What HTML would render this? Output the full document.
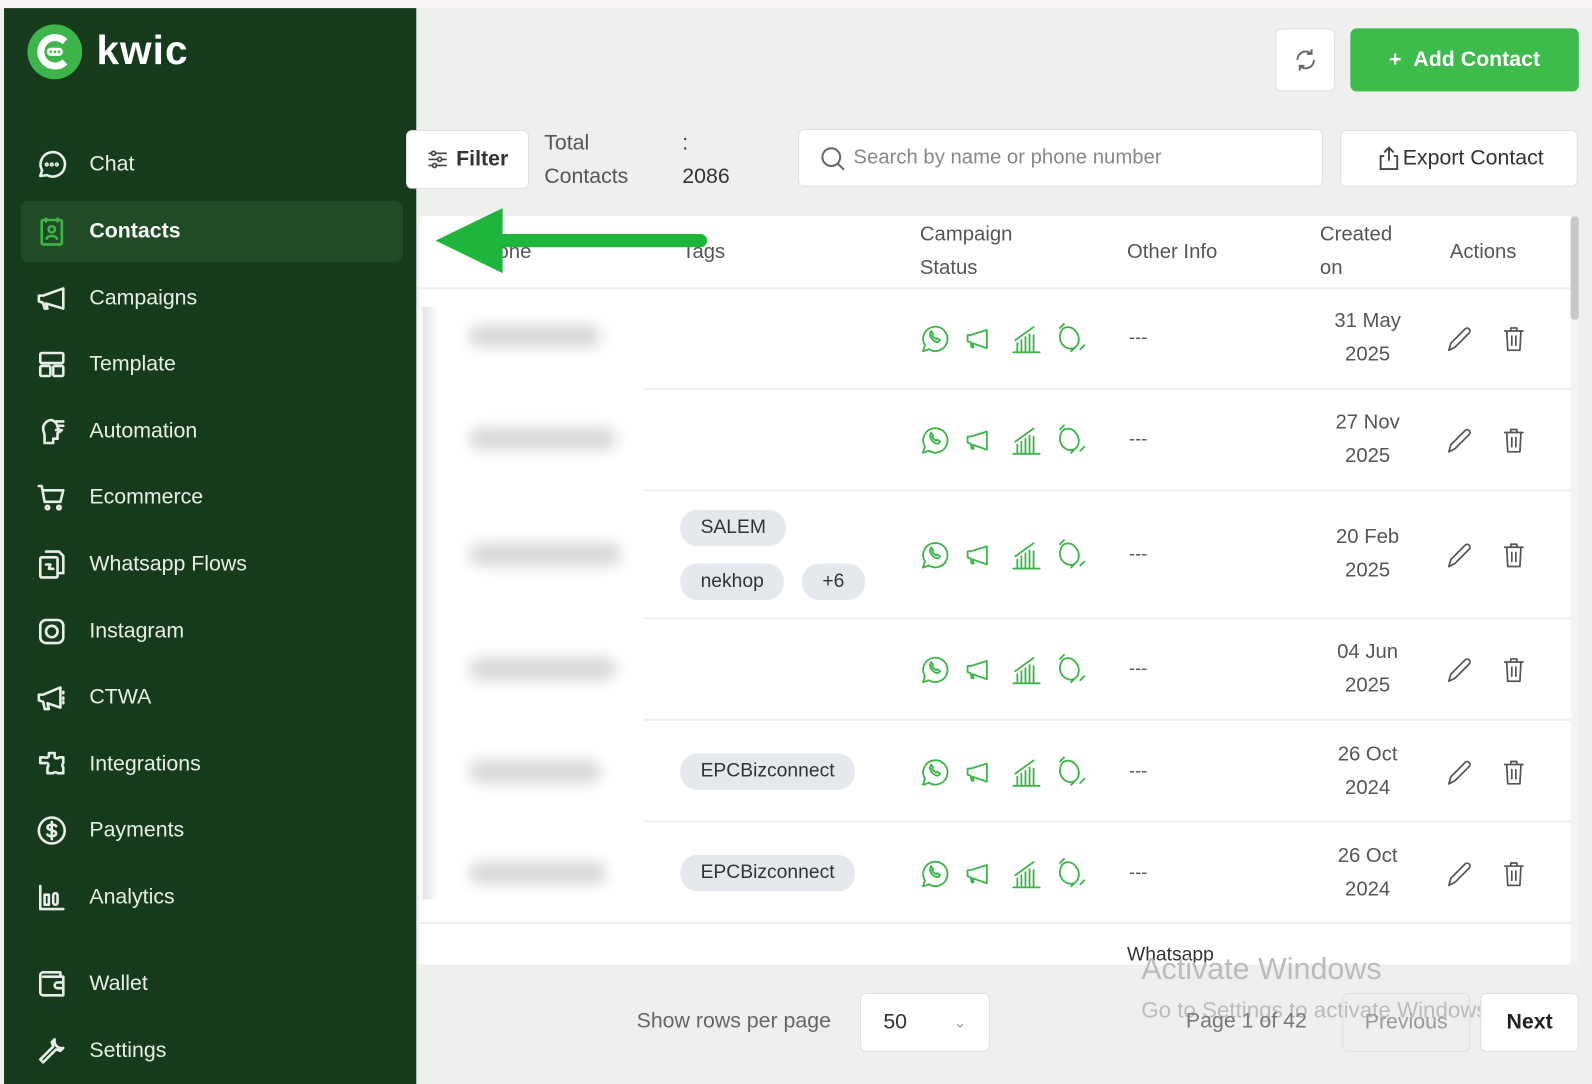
<!DOCTYPE html>
<html><head><meta charset="utf-8"><style>
*{margin:0;padding:0;box-sizing:border-box}
html,body{width:1592px;height:1080px;overflow:hidden;background:#eef0ee;font-family:"Liberation Sans",sans-serif}
#w{position:absolute;left:0;top:0;width:1568px;height:1064px;transform:scale(1.01531);transform-origin:0 0;background:#eef0ee}
.a{position:absolute}
#sb{left:4px;top:8px;width:406px;height:1060px;background:#163a1c}
.mi{position:absolute;left:30px;color:#e8efe8;font-size:21px;display:flex;align-items:center;gap:20px}
.mi svg{width:34px;height:34px;stroke:#e8efe8;fill:none;stroke-width:1.8;stroke-linecap:round;stroke-linejoin:round}
.btn{position:absolute;background:#fff;border:1px solid #dde0dd;border-radius:6px;display:flex;align-items:center;justify-content:center;color:#333;font-size:21px}
.th{position:absolute;color:#555;font-size:20px;line-height:33px}
.rl{position:absolute;left:634px;width:913px;height:2px;background:#eceeed}
.date{position:absolute;left:1300px;width:94px;text-align:center;color:#555;font-size:20px;line-height:33px}
.dash{position:absolute;left:1112px;color:#555;font-size:18px}
.tag{position:absolute;background:#e5e9ee;border-radius:17px;height:36px;line-height:36px;padding:0 20px;color:#333;font-size:19px}
.blur{position:absolute;height:22px;background:#d6d7d7;border-radius:11px;filter:blur(7px)}
.ic{position:absolute}
</style></head><body><div id="w">
<div class="a" style="left:0;top:0;width:1568px;height:8px;background:#fbf6fa"></div>
<div id="sb" class="a">
 <svg class="a" style="left:22px;top:15px" width="56" height="56" viewBox="0 0 56 56"><circle cx="28" cy="28" r="27" fill="#3db54a"/><path d="M38 18a14 14 0 1 0 0 20" stroke="#fff" stroke-width="7" fill="none"/><rect x="20" y="24" width="16" height="8" rx="4" fill="#fff"/><circle cx="24" cy="28" r="1.3" fill="#3db54a"/><circle cx="28" cy="28" r="1.3" fill="#3db54a"/><circle cx="32" cy="28" r="1.3" fill="#3db54a"/></svg>
 <div class="a" style="left:91px;top:20px;color:#fff;font-size:40px;font-weight:bold;letter-spacing:1px">kwic</div>
 <div class="a" style="left:16px;top:190px;width:377px;height:60px;background:#1f4b25;border-radius:8px"></div>
 <div class="mi" style="top:137px"><svg viewBox="0 0 24 24"><path d="M4 20l1.3-3.9A8.5 8.5 0 1 1 8.7 19.4z"/><circle cx="8.5" cy="12" r=".6"/><circle cx="12" cy="12" r=".6"/><circle cx="15.5" cy="12" r=".6"/></svg>Chat</div>
 <div class="mi" style="top:203px;font-weight:bold;color:#fff"><svg viewBox="0 0 24 24" style="stroke:#3db54a"><rect x="5" y="4" width="14" height="17" rx="1"/><path d="M8 3v2M16 3v2"/><circle cx="12" cy="10.5" r="2.2"/><path d="M8.5 17c.5-2.5 6.5-2.5 7 0"/></svg>Contacts</div>
 <div class="mi" style="top:269px"><svg viewBox="0 0 24 24"><path d="M3 10v4l3 1 1 4h2l-1-3.5L20 19V5L6 10z"/></svg>Campaigns</div>
 <div class="mi" style="top:334px"><svg viewBox="0 0 24 24"><rect x="4" y="4" width="16" height="7" rx="1"/><rect x="4" y="13" width="7" height="7" rx="1"/><rect x="13" y="13" width="7" height="7" rx="1"/></svg>Template</div>
 <div class="mi" style="top:400px"><svg viewBox="0 0 24 24"><path d="M12 4a6 6 0 0 0-6 6c0 2 1 3 1 5v5h6v-3h3v-4l2-1-2-3a6 6 0 0 0-4-5z"/><path d="M15 5h5M16 8h4M15 11h4"/></svg>Automation</div>
 <div class="mi" style="top:465px"><svg viewBox="0 0 24 24"><path d="M3 4h2l2 11h11l2-8H6"/><circle cx="9" cy="19" r="1.2"/><circle cx="17" cy="19" r="1.2"/></svg>Ecommerce</div>
 <div class="mi" style="top:531px"><svg viewBox="0 0 24 24"><path d="M8 3h9l3 3v12h-4"/><rect x="4" y="7" width="12" height="14" rx="1"/><path d="M8 12h3l-1 3h3"/></svg>Whatsapp Flows</div>
 <div class="mi" style="top:597px"><svg viewBox="0 0 24 24"><rect x="4" y="4" width="16" height="16" rx="4"/><circle cx="12" cy="12" r="4"/></svg>Instagram</div>
 <div class="mi" style="top:662px"><svg viewBox="0 0 24 24"><path d="M3 10v4l3 1 1 5h3l-1-4 9 3V5L6 10z"/><path d="M20 8v1M20 12v1M20 15v1"/></svg>CTWA</div>
 <div class="mi" style="top:728px"><svg viewBox="0 0 24 24"><path d="M10 4h4v3a2 2 0 0 0 3 0h3v4a2 2 0 0 0 0 3v4h-4a2 2 0 0 0-3 0H9v-4a2 2 0 0 0 0-3H4V7h3a2 2 0 0 0 3-1z"/></svg>Integrations</div>
 <div class="mi" style="top:793px"><svg viewBox="0 0 24 24"><circle cx="12" cy="12" r="9"/><path d="M15 9c-1-1.5-6-1.5-6 .8S15 11.5 15 14s-5 2.3-6 .8M12 6v12"/></svg>Payments</div>
 <div class="mi" style="top:859px"><svg viewBox="0 0 24 24"><path d="M4 4v16h16"/><rect x="7" y="10" width="3" height="7"/><rect x="13" y="9" width="3" height="8" rx="1.5"/></svg>Analytics</div>
 <div class="mi" style="top:944px"><svg viewBox="0 0 24 24"><path d="M18 7V4H6a2 2 0 0 0-2 2v12a2 2 0 0 0 2 2h14V7H6"/><path d="M20 11h-4a2 2 0 0 0 0 4h4"/></svg>Wallet</div>
 <div class="mi" style="top:1010px"><svg viewBox="0 0 24 24"><path d="M14 4a5 5 0 0 0 6 6l-2 2-3-1-9 9-2-2 9-9-1-3z"/></svg>Settings</div>
</div>

<div class="btn" style="left:1256px;top:28px;width:59px;height:62px"><svg width="28" height="28" viewBox="0 0 24 24" fill="none" stroke="#666" stroke-width="1.6"><path d="M19 12a7 7 0 0 1-12 5M5 12a7 7 0 0 1 12-5M17 3v4h-4M7 21v-4h4"/></svg></div>
<div class="btn" style="left:1330px;top:28px;width:225px;height:62px;background:#3dbb4b;border-color:#3dbb4b;color:#fff;font-weight:bold;font-size:21px">+&nbsp;&nbsp;Add Contact</div>

<div class="btn" style="left:400px;top:128px;width:121px;height:58px;font-weight:bold;border-left:none"><svg width="24" height="24" viewBox="0 0 24 24" fill="none" stroke="#444" stroke-width="1.6"><path d="M3 6h18M3 12h18M3 18h18"/><circle cx="8" cy="6" r="2" fill="#fff"/><circle cx="14" cy="12" r="2" fill="#fff"/><circle cx="9" cy="18" r="2" fill="#fff"/></svg>&nbsp;Filter</div>
<div class="a" style="left:536px;top:124px;color:#555;font-size:21px;line-height:33px">Total<br>Contacts</div>
<div class="a" style="left:672px;top:124px;color:#333;font-size:21px;line-height:33px">:<br>2086</div>
<div class="btn" style="left:786px;top:127px;width:517px;height:57px;justify-content:flex-start;padding-left:18px;color:#888;font-size:20px"><svg width="30" height="30" viewBox="0 0 24 24" fill="none" stroke="#666" stroke-width="1.6"><circle cx="11" cy="11" r="7"/><path d="M16 16l5 5"/></svg>&nbsp;Search by name or phone number</div>
<div class="btn" style="left:1320px;top:128px;width:234px;height:56px"><svg width="28" height="28" viewBox="0 0 24 24" fill="none" stroke="#444" stroke-width="1.6"><path d="M12 14V3M8 7l4-4 4 4M8 10H5v11h14V10h-3"/></svg>Export Contact</div>

<div class="a" style="left:413px;top:213px;width:1134px;height:737px;background:#fff"></div>
<div class="a" style="left:413px;top:283px;width:1134px;height:2px;background:#eceeed"></div>
<div class="a" style="left:1547px;top:213px;width:8px;height:737px;background:#f3f3f3"></div>
<div class="a" style="left:1547px;top:213px;width:8px;height:102px;background:#c8c8c8;border-radius:4px"></div>
<div class="th" style="left:490px;top:232px">one</div>
<div class="th" style="left:672px;top:232px">Tags</div>
<div class="th" style="left:906px;top:215px">Campaign<br>Status</div>
<div class="th" style="left:1110px;top:232px">Other Info</div>
<div class="th" style="left:1300px;top:215px">Created<br>on</div>
<div class="th" style="left:1428px;top:232px">Actions</div>

<div class="a" style="left:416px;top:302px;width:14px;height:584px;background:linear-gradient(90deg,#e3e3e3,#fafafa)"></div>
<div class="blur" style="left:462px;top:320px;width:130px"></div>
<div class="blur" style="left:462px;top:421px;width:145px"></div>
<div class="blur" style="left:462px;top:535px;width:150px"></div>
<div class="blur" style="left:462px;top:648px;width:145px"></div>
<div class="blur" style="left:462px;top:749px;width:130px"></div>
<div class="blur" style="left:462px;top:849px;width:135px"></div>

<div class="rl" style="top:382px"></div><div class="rl" style="top:482px"></div><div class="rl" style="top:608px"></div><div class="rl" style="top:708px"></div><div class="rl" style="top:808px"></div><div class="rl" style="left:413px;width:1134px;top:908px"></div>

<div class="tag" style="left:670px;top:502px">SALEM</div>
<div class="tag" style="left:670px;top:555px">nekhop</div>
<div class="tag" style="left:790px;top:555px">+6</div>
<div class="tag" style="left:670px;top:742px">EPCBizconnect</div>
<div class="tag" style="left:670px;top:842px">EPCBizconnect</div>

<svg width="0" height="0" style="position:absolute"><defs>
<g id="st" fill="none" stroke="#3cb54a" stroke-width="1.8" stroke-linecap="round" stroke-linejoin="round">
<path d="M3 29l2-6a12 12 0 1 1 4 4z"/><path d="M10 12c0 4 4 8 8 8l2-2-3-2-1 1c-2-1-3-2-4-4l1-1-2-3z"/>
<path d="M47 13v6l3 1 1 5h2l-1-4 14 5V8L50 13z"/>
<path d="M92 30h26M96 29v-8M100 29v-11M104 29v-14M108 29v-17M112 29v-16M94 18l18-13"/>
<path d="M140 8c3-4 10-4 14 2 4 5 3 12-1 15-4 3-11 1-14-5-2-4-1-9 1-12zM138 6l4-4M158 27l4-4M149 29l3-3"/>
</g></defs></svg>

<div class="ic" style="left:906px;top:317px"><svg width="175" height="34"><use href="#st"/></svg></div>
<div class="ic" style="left:906px;top:417px"><svg width="175" height="34"><use href="#st"/></svg></div>
<div class="ic" style="left:906px;top:530px"><svg width="175" height="34"><use href="#st"/></svg></div>
<div class="ic" style="left:906px;top:643px"><svg width="175" height="34"><use href="#st"/></svg></div>
<div class="ic" style="left:906px;top:744px"><svg width="175" height="34"><use href="#st"/></svg></div>
<div class="ic" style="left:906px;top:844px"><svg width="175" height="34"><use href="#st"/></svg></div>

<div class="dash" style="top:322px">---</div><div class="dash" style="top:422px">---</div><div class="dash" style="top:535px">---</div><div class="dash" style="top:648px">---</div><div class="dash" style="top:749px">---</div><div class="dash" style="top:849px">---</div>
<div class="date" style="top:300px">31 May<br>2025</div>
<div class="date" style="top:400px">27 Nov<br>2025</div>
<div class="date" style="top:513px">20 Feb<br>2025</div>
<div class="date" style="top:626px">04 Jun<br>2025</div>
<div class="date" style="top:727px">26 Oct<br>2024</div>
<div class="date" style="top:827px">26 Oct<br>2024</div>

<svg width="0" height="0" style="position:absolute"><defs><g id="ac" fill="none" stroke="#555" stroke-width="1.7" stroke-linecap="round" stroke-linejoin="round">
<path d="M3 27l2-7 14-14a2.5 2.5 0 0 1 4 4L9 24z"/>
<path d="M58 8h18M64 8V5h6v3M60 8l1 19h12l1-19M65 13v9M69 13v9"/></g></defs></svg>
<div class="ic" style="left:1424px;top:318px"><svg width="90" height="32"><use href="#ac"/></svg></div>
<div class="ic" style="left:1424px;top:418px"><svg width="90" height="32"><use href="#ac"/></svg></div>
<div class="ic" style="left:1424px;top:531px"><svg width="90" height="32"><use href="#ac"/></svg></div>
<div class="ic" style="left:1424px;top:644px"><svg width="90" height="32"><use href="#ac"/></svg></div>
<div class="ic" style="left:1424px;top:745px"><svg width="90" height="32"><use href="#ac"/></svg></div>
<div class="ic" style="left:1424px;top:845px"><svg width="90" height="32"><use href="#ac"/></svg></div>

<div class="a" style="left:1110px;top:930px;color:#333;font-size:19px;height:18px;overflow:hidden">Whatsapp</div>

<svg class="a" style="left:425px;top:202px" width="275" height="70"><path d="M265 35H60" stroke="#1fb53c" stroke-width="13" stroke-linecap="round"/><path d="M4 35L70 3V67z" fill="#1fb53c"/></svg>

<div class="a" style="left:627px;top:994px;color:#666;font-size:21px">Show rows per page</div>
<div class="btn" style="left:847px;top:978px;width:128px;height:58px;justify-content:space-between;padding:0 22px;color:#333">50<span style="color:#999;font-size:15px">&#8964;</span></div>
<div class="a" style="left:1124px;top:938px;color:#bbb;font-size:30px">Activate Windows</div>
<div class="a" style="left:1124px;top:982px;color:#bbb;font-size:22px">Go to Settings to activate Windows.</div>
<div class="a" style="left:1168px;top:994px;color:#777;font-size:21px">Page 1 of 42</div>
<div class="btn" style="left:1322px;top:978px;width:126px;height:58px;color:#999;background:transparent">Previous</div>
<div class="btn" style="left:1458px;top:978px;width:97px;height:58px;color:#222;font-weight:bold">Next</div>
</div></body></html>
